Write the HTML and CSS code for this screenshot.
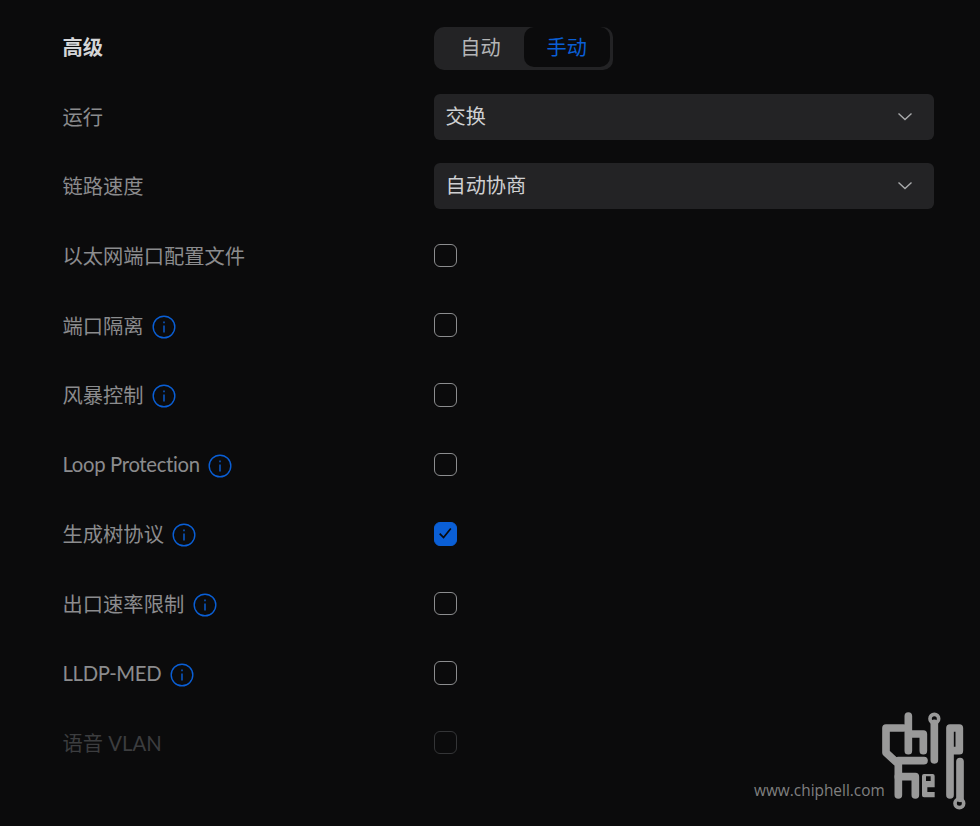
FILE: index.html
```html
<!DOCTYPE html>
<html>
	<head>
		<meta charset="UTF-8">
		<title>高级</title>
		<link rel="stylesheet" href="styles.css">
	</head>
	<body>
		<div class="form">
			<div class="row">
				<div class="label title">高级</div>
				<div class="seg">
					<span class="seg-item">自动</span>
					<span class="seg-item active">手动</span>
				</div>
			</div>
			<div class="row">
				<div class="label">运行</div>
				<div class="select">交换
					<svg class="arrow" viewBox="0 0 16 10"><path d="M1.5 1.5 8 7.5 14.5 1.5"/></svg>
				</div>
			</div>
			<div class="row">
				<div class="label">链路速度</div>
				<div class="select">自动协商
					<svg class="arrow" viewBox="0 0 16 10"><path d="M1.5 1.5 8 7.5 14.5 1.5"/></svg>
				</div>
			</div>
			<div class="row">
				<div class="label">以太网端口配置文件</div>
				<span class="check"></span>
			</div>
			<div class="row">
				<div class="label">端口隔离
					<svg class="info" viewBox="0 0 24 24"><circle cx="12" cy="12" r="10.8"/><path d="M12 10.5V17.5M12 6.6V8.2"/></svg>
				</div>
				<span class="check"></span>
			</div>
			<div class="row">
				<div class="label">风暴控制
					<svg class="info" viewBox="0 0 24 24"><circle cx="12" cy="12" r="10.8"/><path d="M12 10.5V17.5M12 6.6V8.2"/></svg>
				</div>
				<span class="check"></span>
			</div>
			<div class="row">
				<div class="label tight">Loop Protection
					<svg class="info" viewBox="0 0 24 24"><circle cx="12" cy="12" r="10.8"/><path d="M12 10.5V17.5M12 6.6V8.2"/></svg>
				</div>
				<span class="check"></span>
			</div>
			<div class="row">
				<div class="label">生成树协议
					<svg class="info" viewBox="0 0 24 24"><circle cx="12" cy="12" r="10.8"/><path d="M12 10.5V17.5M12 6.6V8.2"/></svg>
				</div>
				<span class="check checked">
					<svg viewBox="0 0 24 24"><path d="M5.5 12.5 10 17 18.5 6.5"/></svg>
				</span>
			</div>
			<div class="row">
				<div class="label">出口速率限制
					<svg class="info" viewBox="0 0 24 24"><circle cx="12" cy="12" r="10.8"/><path d="M12 10.5V17.5M12 6.6V8.2"/></svg>
				</div>
				<span class="check"></span>
			</div>
			<div class="row">
				<div class="label tight">LLDP-MED
					<svg class="info" viewBox="0 0 24 24"><circle cx="12" cy="12" r="10.8"/><path d="M12 10.5V17.5M12 6.6V8.2"/></svg>
				</div>
				<span class="check"></span>
			</div>
			<div class="row disabled">
				<div class="label">语音 VLAN</div>
				<span class="check"></span>
			</div>
		</div>

		<div class="mark">
			<span class="mark-url">www.chiphell.com</span>
			<svg class="mark-logo" viewBox="420 30 270 300">
				<path d="M490 84H438V158L475 192V285"/>
				<path d="M475 182H552"/>
				<path d="M505 48V152M505 102H550V152"/>
				<circle class="ring" cx="583" cy="56" r="13"/>
				<path d="M583 70V180"/>
				<path d="M630 285V84H658V152H630"/>
				<path d="M660 185V295"/>
				<circle class="ring" cx="658" cy="310" r="13"/>
				<path d="M475 230H526V285"/>
				<path class="solid" d="M552 222H578Q584 222 584 228V262H562V276H584V292H552Q546 292 546 286V228Q546 222 552 222ZM558 229V243H572V229Z"/>
			</svg>
		</div>
	</body>
</html>
```

FILE: styles.css
```css
*{
	margin:0px;
	padding:0px;
	box-sizing:border-box;
}
body{
	width:980px;
	height:826px;
	background:#0b0b0c;
	font-family:"Lato","Noto Sans CJK SC",sans-serif;
	position:relative;
	overflow:hidden;
}
.form{
	padding:12px 46.5px 0 62.5px;
	display:grid;
	grid-auto-rows:69.6px;
}
.row{
	display:grid;
	grid-template-columns:371px 500px;
	align-items:center;
}
.label{
	display:flex;
	align-items:center;
	gap:8.5px;
	padding-bottom:1px;
	font-size:20.3px;
	color:#8b8c8e;
}
.tight{
	letter-spacing:-.33px;
}
.title{
	color:#d4d5d7;
	font-weight:700;
}
.seg{
	width:179.5px;
	height:43px;
	background:#232325;
	border-radius:10px;
	display:flex;
	padding:0 3px 3px 0;
	align-items:stretch;
	margin-top:3px;
}
.seg-item{
	flex:0 0 90px;
	padding-left:4px;
	display:flex;
	align-items:center;
	justify-content:center;
	font-size:20.16px;
	color:#b4b5b7;
}
.seg-item.active{
	flex:0 0 86.5px;
	padding-left:0;
	background:#0b0b0c;
	border-radius:10px;
	color:#0a5fd6;
}
.select{
	height:46px;
	margin-top:1px;
	background:#232325;
	border-radius:6px;
	padding:0 12px 3px;
	display:flex;
	align-items:center;
	justify-content:space-between;
	font-size:20.16px;
	color:#cfd0d2;
}
.arrow{
	width:16px;
	height:10px;
	margin:3px 9px 0 0;
	fill:none;
	stroke:#a9aaac;
	stroke-width:1.4;
}
.info{
	width:24px;
	height:24px;
	margin-top:4px;
	fill:none;
	stroke:#0a5fd6;
	stroke-width:1.4;
}
.check{
	width:23.5px;
	height:23.5px;
	border:1.4px solid #8c8d8f;
	border-radius:6px;
	display:block;
}
.check.checked{
	background:#0a5fd6;
	border-color:#0a5fd6;
}
.check svg{
	display:block;
	width:20.5px;
	height:20.5px;
	fill:none;
	stroke:#0b0b0c;
	stroke-width:2;
}
.disabled .label{
	color:#3c3d3f;
}
.disabled .check{
	border-color:#343537;
}
.mark{
	position:absolute;
	left:754px;
	top:710px;
	width:216px;
	height:100px;
}
.mark-url{
	position:absolute;
	left:0;
	top:70px;
	font-family:"Open Sans",sans-serif;
	font-size:15.4px;
	color:#808080;
}
.mark-logo{
	position:absolute;
	left:126px;
	top:0;
	width:90px;
	height:100px;
	fill:none;
	stroke:#999;
	stroke-width:23;
	stroke-linecap:round;
	stroke-linejoin:round;
}
.mark-logo .ring{
	stroke-width:11;
}
.mark-logo .solid{
	fill:#999;
	fill-rule:evenodd;
	stroke:none;
}
```
